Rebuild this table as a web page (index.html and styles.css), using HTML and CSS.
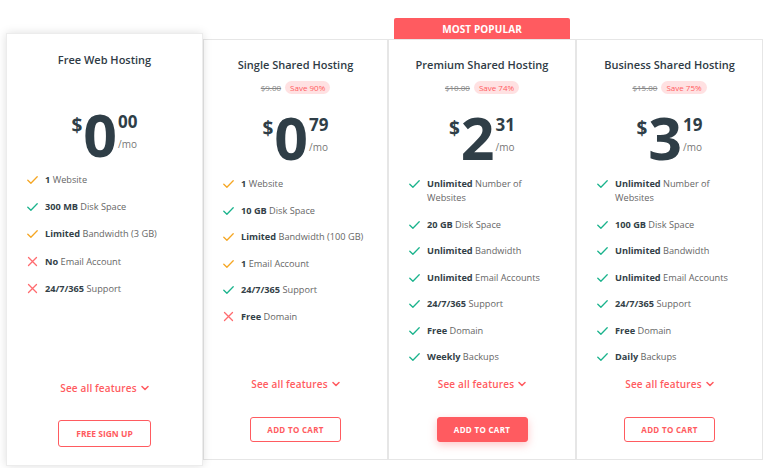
FILE: index.html
```html
<!DOCTYPE html>
<html lang="en">
<head>
<meta charset="utf-8">
<title>Hosting Plans</title>
<link rel="stylesheet" href="styles.css">
</head>
<body>
<svg class="defs" width="0" height="0" aria-hidden="true">
  <symbol id="i-check" viewBox="0 0 11 14"><polyline points="0.8,7.2 3.9,10.2 10.2,3.8" fill="none" stroke="currentColor" stroke-width="1.3" stroke-linecap="round" stroke-linejoin="round"/></symbol>
  <symbol id="i-x" viewBox="0 0 11 14"><path d="M1.5 2.5 L9.5 10.5 M9.5 2.5 L1.5 10.5" fill="none" stroke="currentColor" stroke-width="1.3" stroke-linecap="round"/></symbol>
  <symbol id="i-chev" viewBox="0 0 8 6"><polyline points="1,1.5 4,4.5 7,1.5" fill="none" stroke="currentColor" stroke-width="1.5" stroke-linecap="round" stroke-linejoin="round"/></symbol>
</svg>
<div class="page">
  <div class="card card-free">
    <h3 class="title">Free Web Hosting</h3>
    <div class="price">
      <span class="cur">$</span><span class="int">0</span><span class="side"><span class="cents">00</span><span class="per">/mo</span></span>
    </div>
    <ul class="features">
      <li><svg class="ic orange"><use href="#i-check"/></svg><span class="txt"><b>1</b> Website</span></li>
      <li><svg class="ic green"><use href="#i-check"/></svg><span class="txt"><b>300 MB</b> Disk Space</span></li>
      <li><svg class="ic orange"><use href="#i-check"/></svg><span class="txt"><b>Limited</b> Bandwidth (3 GB)</span></li>
      <li><svg class="ic red"><use href="#i-x"/></svg><span class="txt"><b>No</b> Email Account</span></li>
      <li><svg class="ic red"><use href="#i-x"/></svg><span class="txt"><b>24/7/365</b> Support</span></li>
    </ul>
    <a class="see-all">See all features <svg class="chev"><use href="#i-chev"/></svg></a>
    <a class="btn">FREE SIGN UP</a>
  </div>
  <div class="group">
    <div class="card plan plan-single">
      <h3 class="title">Single Shared Hosting</h3>
      <div class="old"><s>$9.00</s><span class="save">Save 90%</span></div>
      <div class="price">
        <span class="cur">$</span><span class="int">0</span><span class="side"><span class="cents">79</span><span class="per">/mo</span></span>
      </div>
      <ul class="features">
        <li><svg class="ic orange"><use href="#i-check"/></svg><span class="txt"><b>1</b> Website</span></li>
        <li><svg class="ic green"><use href="#i-check"/></svg><span class="txt"><b>10 GB</b> Disk Space</span></li>
        <li><svg class="ic orange"><use href="#i-check"/></svg><span class="txt"><b>Limited</b> Bandwidth (100 GB)</span></li>
        <li><svg class="ic orange"><use href="#i-check"/></svg><span class="txt"><b>1</b> Email Account</span></li>
        <li><svg class="ic green"><use href="#i-check"/></svg><span class="txt"><b>24/7/365</b> Support</span></li>
        <li><svg class="ic red"><use href="#i-x"/></svg><span class="txt"><b>Free</b> Domain</span></li>
      </ul>
      <a class="see-all">See all features <svg class="chev"><use href="#i-chev"/></svg></a>
      <a class="btn">ADD TO CART</a>
    </div>
    <div class="card plan plan-premium">
      <div class="badge">MOST POPULAR</div>
      <h3 class="title">Premium Shared Hosting</h3>
      <div class="old"><s>$10.00</s><span class="save">Save 74%</span></div>
      <div class="price">
        <span class="cur">$</span><span class="int">2</span><span class="side"><span class="cents">31</span><span class="per">/mo</span></span>
      </div>
      <ul class="features">
        <li><svg class="ic green"><use href="#i-check"/></svg><span class="txt"><b>Unlimited</b> Number of Websites</span></li>
        <li><svg class="ic green"><use href="#i-check"/></svg><span class="txt"><b>20 GB</b> Disk Space</span></li>
        <li><svg class="ic green"><use href="#i-check"/></svg><span class="txt"><b>Unlimited</b> Bandwidth</span></li>
        <li><svg class="ic green"><use href="#i-check"/></svg><span class="txt"><b>Unlimited</b> Email Accounts</span></li>
        <li><svg class="ic green"><use href="#i-check"/></svg><span class="txt"><b>24/7/365</b> Support</span></li>
        <li><svg class="ic green"><use href="#i-check"/></svg><span class="txt"><b>Free</b> Domain</span></li>
        <li><svg class="ic green"><use href="#i-check"/></svg><span class="txt"><b>Weekly</b> Backups</span></li>
      </ul>
      <a class="see-all">See all features <svg class="chev"><use href="#i-chev"/></svg></a>
      <a class="btn btn-solid">ADD TO CART</a>
    </div>
    <div class="card plan plan-business">
      <h3 class="title">Business Shared Hosting</h3>
      <div class="old"><s>$15.00</s><span class="save">Save 75%</span></div>
      <div class="price">
        <span class="cur">$</span><span class="int">3</span><span class="side"><span class="cents">19</span><span class="per">/mo</span></span>
      </div>
      <ul class="features">
        <li><svg class="ic green"><use href="#i-check"/></svg><span class="txt"><b>Unlimited</b> Number of Websites</span></li>
        <li><svg class="ic green"><use href="#i-check"/></svg><span class="txt"><b>100 GB</b> Disk Space</span></li>
        <li><svg class="ic green"><use href="#i-check"/></svg><span class="txt"><b>Unlimited</b> Bandwidth</span></li>
        <li><svg class="ic green"><use href="#i-check"/></svg><span class="txt"><b>Unlimited</b> Email Accounts</span></li>
        <li><svg class="ic green"><use href="#i-check"/></svg><span class="txt"><b>24/7/365</b> Support</span></li>
        <li><svg class="ic green"><use href="#i-check"/></svg><span class="txt"><b>Free</b> Domain</span></li>
        <li><svg class="ic green"><use href="#i-check"/></svg><span class="txt"><b>Daily</b> Backups</span></li>
      </ul>
      <a class="see-all">See all features <svg class="chev"><use href="#i-chev"/></svg></a>
      <a class="btn">ADD TO CART</a>
    </div>
  </div>
</div>
</body>
</html>
```

FILE: styles.css
```css
* { box-sizing: border-box; }
html, body { margin: 0; padding: 0; background: #fff; }
body {
  font-family: "Open Sans", "Noto Sans", sans-serif;
  color: #333f48;
  width: 769px;
  height: 468px;
  overflow: hidden;
}
.defs { position: absolute; width: 0; height: 0; overflow: hidden; }

.page {
  display: flex;
  align-items: flex-start;
  padding-left: 6px;
}

.card {
  background: #fff;
  display: flex;
  flex-direction: column;
  align-items: center;
}

.card-free {
  width: 197px;
  height: 433px;
  margin-top: 33px;
  border: 1px solid #ececec;
  box-shadow: 0 0 9px rgba(0, 0, 0, 0.13);
  position: relative;
  z-index: 1;
  padding: 18px 0 18px;
}

.group {
  display: flex;
  margin-top: 39px;
}

.plan {
  height: 421px;
  border: 1px solid #e6e6e6;
  padding: 17px 0 17px;
  position: relative;
}
.plan-single { width: 185px; }
.plan-premium { width: 188px; }
.plan-business { width: 187px; }

.badge {
  position: absolute;
  top: -22px;
  left: 5px;
  right: 5px;
  height: 21px;
  background: #ff5b60;
  border-radius: 2px 2px 0 0;
  color: #fff;
  font-size: 10px;
  font-weight: 700;
  letter-spacing: 0.1px;
  display: flex;
  align-items: center;
  justify-content: center;
}

.title {
  margin: 0;
  font-size: 11px;
  line-height: 16px;
  font-weight: 600;
  color: #2f3b45;
}

.old {
  margin-top: 7px;
  height: 14px;
  display: flex;
  align-items: center;
  gap: 4px;
  font-size: 8px;
}
.old s { color: #888; }
.save {
  background: #ffe1e2;
  color: #ff5b60;
  border-radius: 7px;
  height: 13px;
  line-height: 13px;
  padding: 0 5px;
}

.price {
  display: flex;
  align-items: flex-start;
  height: 46px;
  margin-top: 20px;
  color: #2f3e47;
}
.card-free .price { margin-top: 43px; }
.cur {
  font-size: 19px;
  line-height: 19px;
  font-weight: 700;
  margin-top: 5px;
  margin-right: 1px;
}
.int {
  font-size: 59px;
  line-height: 46px;
  font-weight: 700;
  letter-spacing: -1px;
}
.side {
  display: flex;
  flex-direction: column;
  margin-left: 2px;
}
.cents {
  font-size: 17px;
  line-height: 17px;
  font-weight: 700;
  margin-top: 2px;
}
.per {
  font-size: 10px;
  line-height: 12px;
  color: #777;
  margin-top: 8px;
}

.features {
  list-style: none;
  margin: 17px 0 0;
  padding: 0 16px 0 20px;
  align-self: stretch;
}
.card-free .features { margin-top: 16px; padding-left: 20px; }
.plan-single .features { padding-left: 19px; }
.features li {
  display: flex;
  gap: 7px;
  font-size: 9.2px;
  line-height: 14px;
  color: #666;
  margin-bottom: 12.5px;
}
.card-free .features li { margin-bottom: 13.2px; }
.txt { display: block; }
.features b { color: #333f48; font-weight: 700; }
.ic {
  width: 11px;
  height: 14px;
  flex: none;
}
.orange { color: #f5a623; }
.green { color: #1ab38c; }
.red { color: #ff6b6f; }

.see-all {
  margin-top: auto;
  display: flex;
  align-items: center;
  gap: 4px;
  font-size: 10px;
  line-height: 14px;
  font-weight: 600;
  letter-spacing: 0.15px;
  color: #ff5b60;
}
.chev { width: 8px; height: 6px; color: #ff5b60; }

.btn {
  margin-top: 26px;
  width: 91px;
  height: 25px;
  border: 1px solid #ff5b60;
  border-radius: 3px;
  color: #ff5b60;
  font-size: 8px;
  font-weight: 700;
  letter-spacing: 0.3px;
  display: flex;
  align-items: center;
  justify-content: center;
}
.card-free .btn {
  width: 93px;
  height: 27px;
  margin-top: 25px;
  letter-spacing: 0;
  font-size: 8.5px;
}
.btn-solid {
  background: #ff5b60;
  color: #fff;
  box-shadow: 0 3px 8px rgba(255, 91, 96, 0.35);
}
```
